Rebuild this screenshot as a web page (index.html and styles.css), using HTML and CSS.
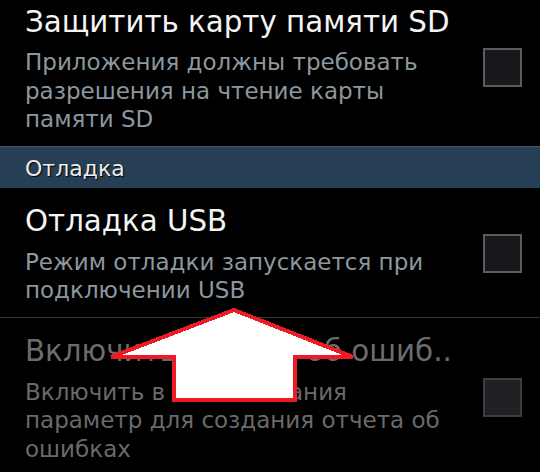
FILE: index.html
```html
<!DOCTYPE html>
<html lang="ru">
<head>
<meta charset="utf-8">
<link rel="stylesheet" href="styles.css">
</head>
<body>
<div class="screen">
  <div class="list">
    <div class="row">
      <div class="text">
        <div class="title">Защитить карту памяти SD</div>
        <div class="sub">Приложения должны требовать разрешения на чтение карты памяти SD</div>
      </div>
      <div class="check"></div>
    </div>
    <div class="header"><span>Отладка</span></div>
    <div class="row divided">
      <div class="text">
        <div class="title">Отладка USB</div>
        <div class="sub">Режим отладки запускается при подключении USB</div>
      </div>
      <div class="check"></div>
    </div>
    <div class="row disabled">
      <div class="text">
        <div class="title nowrap">Включить отчеты об ошиб..</div>
        <div class="sub">Включить в меню питания<br>параметр для создания отчета об ошибках</div>
      </div>
      <div class="check"></div>
    </div>
  </div>
  <svg class="arrow" width="540" height="472" viewBox="0 0 540 472">
    <polygon points="234,310 353,357 295,357 295,400 174,400 174,357 111,357" fill="#ffffff" stroke="#ed1c24" stroke-width="4" stroke-linejoin="miter" shape-rendering="crispEdges"/>
  </svg>
</div>
</body>
</html>
```
FILE: styles.css
```css
html, body {
  margin: 0;
  padding: 0;
  background: #000;
}
.screen {
  position: relative;
  width: 540px;
  height: 472px;
  overflow: hidden;
  background: #000;
  font-family: "DejaVu Sans", Roboto, sans-serif;
}
.list {
  margin-top: -11.5px;
  display: flex;
  flex-direction: column;
}
.row {
  display: flex;
  align-items: center;
  padding: 13.4px 18px 12.2px 25px;
}
.row.divided {
  border-bottom: 1px solid #363636;
}
.text {
  flex: 1;
  min-width: 0;
  padding-right: 28px;
}
.title {
  font-size: 29.3px;
  line-height: 40px;
  color: #f4f4f4;
}
.nowrap {
  white-space: nowrap;
}
.sub {
  margin-top: 6.4px;
  font-size: 23px;
  line-height: 28.5px;
  color: #8c979f;
}
.check {
  flex: none;
  width: 35px;
  height: 35px;
  border: 2px solid #5c5c5c;
  background: #17181c;
}
.disabled .title {
  color: #6c6c6c;
}
.disabled .sub {
  color: #6a6a6a;
}
.disabled .check {
  border-color: #3e3e3e;
  background: #1e2024;
}
.header {
  height: 39px;
  padding-top: 2px;
  border-top: 1px solid #3f566b;
  background: #263f55;
  padding-left: 25px;
  line-height: 39px;
}
.header span {
  font-size: 22px;
  color: #ececec;
  text-shadow: 1px 1px 1px #000;
}
.arrow {
  position: absolute;
  left: 0;
  top: 0;
}
```
